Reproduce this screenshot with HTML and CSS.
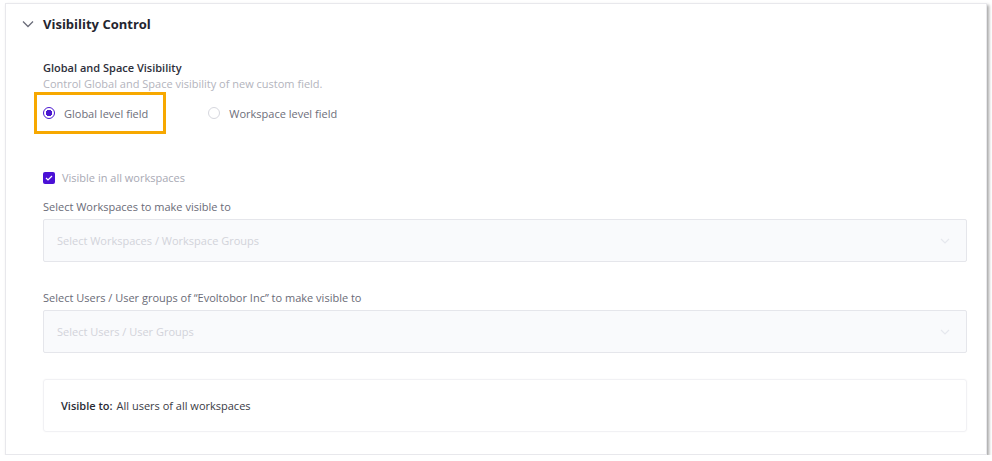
FILE: index.html
```html
<!DOCTYPE html>
<html>
  <head>
    <title>Visibility Control</title>
    <link rel="stylesheet" href="styles.css">
  </head>
  <body>
    <div class="card">
      <!-- Section header -->
      <div class="card-header">
        <svg class="chevron" width="12" height="8" viewBox="0 0 12 8"><path d="M1 1.5l5 5 5-5" fill="none" stroke="#6b6d7a" stroke-width="1.3"/></svg>
        <h2>Visibility Control</h2>
      </div>

      <div class="card-body">
        <div class="field-title">Global and Space Visibility</div>
        <div class="field-help">Control Global and Space visibility of new custom field.</div>

        <div class="radio-row">
          <label class="radio highlight">
            <span class="radio-dot checked"></span>
            Global level field
          </label>
          <label class="radio">
            <span class="radio-dot"></span>
            Workspace level field
          </label>
        </div>

        <label class="check">
          <span class="check-box">
            <svg width="8" height="6" viewBox="0 0 8 6"><path d="M1 3l2 2 4-4" fill="none" stroke="#fff" stroke-width="1.2"/></svg>
          </span>
          Visible in all workspaces
        </label>

        <div class="label">Select Workspaces to make visible to</div>
        <div class="select">
          <span>Select Workspaces / Workspace Groups</span>
          <svg width="10" height="6" viewBox="0 0 10 6"><path d="M1 1l4 4 4-4" fill="none" stroke="#e6e8ee" stroke-width="1.2"/></svg>
        </div>

        <div class="label label-users">Select Users / User groups of “Evoltobor Inc” to make visible to</div>
        <div class="select">
          <span>Select Users / User Groups</span>
          <svg width="10" height="6" viewBox="0 0 10 6"><path d="M1 1l4 4 4-4" fill="none" stroke="#e6e8ee" stroke-width="1.2"/></svg>
        </div>

        <div class="summary">
          <b>Visible to:</b> All users of all workspaces
        </div>
      </div>
    </div>
  </body>
</html>
```
FILE: styles.css
```css
body {
  margin: 0;
  background: #fff;
  font-family: "Open Sans", Arial, sans-serif;
  color: #2e2f3a;
}

.card {
  margin: 3px 0 0 5px;
  width: 982px;
  height: 452px;
  box-sizing: border-box;
  background: #fff;
  border: 1px solid #e8e8ec;
  box-shadow: 2px 2px 3px rgba(0, 0, 0, 0.35);
}

.card-header {
  display: flex;
  align-items: center;
  height: 40px;
  padding-left: 16px;
}

.chevron {
  margin-right: 9px;
}

h2 {
  margin: 0;
  font-size: 13px;
  font-weight: 700;
  color: #24252f;
}

.card-body {
  padding: 16px 19px 0 37px;
}

.field-title {
  font-size: 11px;
  font-weight: 600;
  color: #2e2f3a;
  line-height: 16px;
}

.field-help {
  font-size: 11px;
  color: #b3b4bd;
  line-height: 16px;
}

.radio-row {
  display: flex;
  align-items: center;
}

.radio {
  display: flex;
  align-items: center;
  font-size: 11px;
  color: #6d6e7a;
  height: 36px;
  padding: 0 15px 0 5px;
}

.radio.highlight {
  border: 3px solid #f7a800;
  margin-left: -9px;
  padding-left: 6px;
  margin-right: 37px;
}

.radio-dot {
  width: 10px;
  height: 10px;
  border: 1px solid #d6d7de;
  border-radius: 50%;
  margin-right: 9px;
  box-sizing: content-box;
  background: #fff;
}

.radio-dot.checked {
  border-color: #4a17d0;
  background: radial-gradient(circle, #4a17d0 0 3px, #fff 3.5px);
}

.check {
  display: flex;
  align-items: center;
  margin-top: 36px;
  font-size: 11px;
  color: #a8a9b4;
}

.check-box {
  display: flex;
  align-items: center;
  justify-content: center;
  width: 12px;
  height: 12px;
  border-radius: 2px;
  background: #4a10d6;
  margin-right: 7px;
}

.label {
  font-size: 11px;
  color: #6a6b77;
  margin-top: 14px;
  line-height: 16px;
}

.label-users {
  margin-top: 28px;
}

.select {
  display: flex;
  align-items: center;
  justify-content: space-between;
  height: 43px;
  box-sizing: border-box;
  margin-top: 4px;
  padding: 0 16px 0 13px;
  background: #f9fafc;
  border: 1px solid #e5e6eb;
  border-radius: 2px;
  font-size: 11px;
  color: #d2d3da;
}

.summary {
  margin-top: 26px;
  height: 53px;
  box-sizing: border-box;
  display: flex;
  align-items: center;
  padding-left: 17px;
  border: 1px solid #f1f1f4;
  border-radius: 3px;
  box-shadow: 0 0 2px rgba(0, 0, 0, 0.04);
  font-size: 11px;
  color: #3a3b45;
}

.summary b {
  font-weight: 600;
  margin-right: 4px;
  color: #2a2b35;
}
```
